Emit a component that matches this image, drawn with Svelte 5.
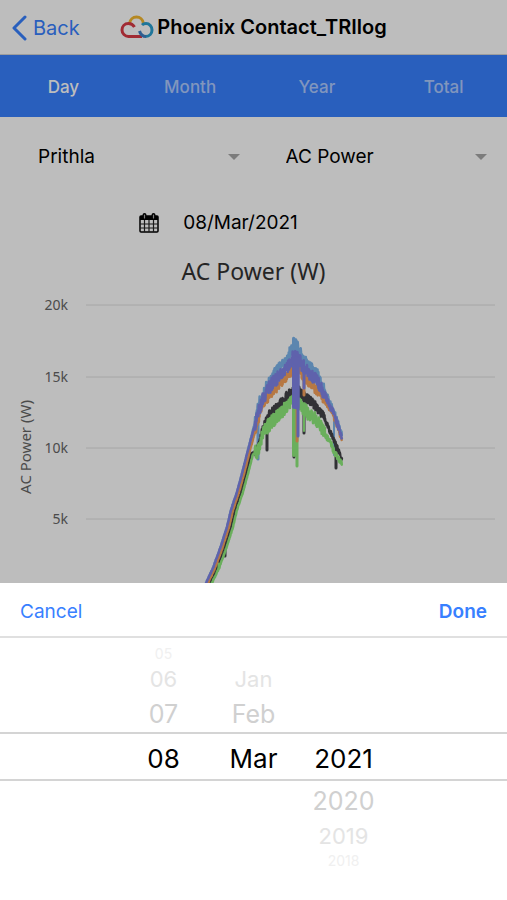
<script lang="ts">
  interface Series {
    name: string;
    color: string;
    jitter: number;
    points: [number, number][];
    // short dips: [x, depth y, stroke width]
    drops: [number, number, number][];
  }

  const tabs = ['Day', 'Month', 'Year', 'Total'];
  let activeTab = $state('Day');
  let plant = $state('Prithla');
  let metric = $state('AC Power');

  const ticks = [
    { label: '20k', y: 20 },
    { label: '15k', y: 92 },
    { label: '10k', y: 163 },
    { label: '5k', y: 234 },
  ];

  const rise: [number, number][] = [[202, 306], [206, 298], [213, 283], [220, 264], [227, 242], [231, 225], [237, 207], [243, 185], [247, 169]];

  const shift = (dx: number): [number, number][] => rise.map(([x, y]) => [x + dx, y]);

  const series: Series[] = [
    {
      name: 'Inverter 1', color: '#7cb5ec', jitter: 8,
      points: [...rise, [257, 129], [262, 110], [267, 103], [273, 91], [282, 83], [288, 74], [293, 60], [298, 64], [307, 81], [317, 91], [325, 107], [333, 125], [342, 150]],
      drops: [[258, 174, 3], [293, 54, 2], [298, 59, 2], [334, 170, 2]],
    },
    {
      name: 'Inverter 2', color: '#434348', jitter: 5,
      points: [...shift(4), [257, 165], [262, 146], [270, 129], [280, 119], [290, 108], [297, 105], [305, 112], [313, 118], [323, 131], [333, 153], [340, 169], [342, 175]],
      drops: [[225, 271, 3], [267, 165, 3], [294, 172, 3], [304, 148, 3], [336, 183, 3]],
    },
    {
      name: 'Inverter 3', color: '#90ed7d', jitter: 7,
      points: [...shift(6), [258, 166], [263, 148], [272, 136], [280, 129], [290, 118], [297, 116], [307, 127], [317, 136], [325, 148], [335, 168], [342, 178]],
      drops: [[219, 279, 3], [294, 170, 4], [297, 181, 3], [304, 146, 2]],
    },
    {
      name: 'Inverter 4', color: '#f7a35c', jitter: 6,
      points: [...shift(2), [257, 139], [263, 120], [270, 108], [280, 98], [290, 87], [296, 82], [303, 90], [310, 98], [320, 107], [333, 129], [342, 155]],
      drops: [[297, 156, 3], [304, 110, 3]],
    },
    {
      name: 'Inverter 5', color: '#8085e9', jitter: 7,
      points: [...rise, [257, 132], [262, 116], [267, 106], [273, 97], [282, 89], [288, 81], [293, 72], [298, 74], [307, 86], [317, 97], [325, 110], [333, 127], [342, 152]],
      drops: [[294, 122, 4], [297, 122, 5], [298, 151, 3], [304, 103, 3]],
    },
  ];

  function noise(n: number): number {
    const s = Math.sin(n * 12.9898) * 43758.5453;
    return (s - Math.floor(s)) * 2 - 1;
  }

  function valueAt(points: [number, number][], x: number): number {
    for (let i = 1; i < points.length; i++) {
      const [x0, y0] = points[i - 1];
      const [x1, y1] = points[i];
      if (x <= x1) return y0 + ((y1 - y0) * (x - x0)) / (x1 - x0);
    }
    return points[points.length - 1][1];
  }

  // The signal is smooth in the morning and gets noisy around noon
  function linePath(s: Series, seed: number): string {
    let d = '';
    for (let x = s.points[0][0]; x <= 342; x += 0.3) {
      const amount = x < 255 ? 0.6 : x > 325 ? s.jitter * 0.5 : s.jitter;
      const y = valueAt(s.points, x) + noise(x + seed * 31) * amount;
      d += `${d ? 'L' : 'M'}${x.toFixed(1)} ${y.toFixed(1)}`;
    }
    return d;
  }

  const columns = [
    { label: 'Day', before: ['05', '06', '07'], selected: '08', after: [] },
    { label: 'Month', before: ['Jan', 'Feb'], selected: 'Mar', after: [] },
    { label: 'Year', before: [], selected: '2021', after: ['2020', '2019', '2018'] },
  ];
</script>

<div class="page">
  <header class="toolbar">
    <button class="back">
      <svg width="15" height="26" viewBox="0 0 15 26" aria-hidden="true">
        <path d="M13 2 2 13l11 11" fill="none" stroke="currentColor" stroke-width="3" stroke-linecap="round" stroke-linejoin="round" />
      </svg>
      Back
    </button>
    <div class="brand">
      <svg width="34" height="24" viewBox="0 0 34 24" fill="none" stroke-width="3" aria-hidden="true">
        <path d="M9.500 8.500C10 4.500 13 2 16.500 2C20 2 23 4.500 23.500 8.500" stroke="#f5b82e" />
        <path d="M14.500 12C13 9.500 11 8.500 8.500 8.500C4.500 8.500 2 11.500 2 15C2 18.500 5 21.500 8.500 21.500H22" stroke="#d93a46" />
        <path d="M22 10C23 9 24.500 8.500 26 8.500C29.500 8.500 32 11.500 32 15C32 18.500 29.500 21.500 25.500 21.500" stroke="#2b9fd0" />
        <path d="M19.500 16C20.500 19.500 23 21.500 26 21.500" stroke="#3f7fc4" />
      </svg>
      <h1>Phoenix Contact_TRIlog</h1>
    </div>
  </header>

  <nav class="tabs">
    {#each tabs as tab}
      <button class:active={activeTab === tab} onclick={() => (activeTab = tab)}>{tab}</button>
    {/each}
  </nav>

  <main>
    <div class="filters">
      <div class="select">
        <select aria-label="Plant" bind:value={plant}>
          <option>Prithla</option>
        </select>
      </div>
      <div class="select">
        <select aria-label="Measurement" bind:value={metric}>
          <option>AC Power</option>
        </select>
      </div>
    </div>

    <button class="date">
      <svg width="20" height="20" viewBox="0 0 20 20" aria-hidden="true">
        <rect x="1" y="3" width="18" height="16" rx="1" fill="none" stroke="#000" stroke-width="1.500" />
        <path d="M1 3h18v4H1z" />
        <path d="M1 11h18M1 15h18M5.500 7v12M10 7v12M14.500 7v12" stroke="#222" stroke-width="1.200" />
        <path d="M5.500 2v3M14.500 2v3" stroke="#000" stroke-width="4" stroke-linecap="round" />
        <path d="M5.500 2v3M14.500 2v3" stroke="#aaa" stroke-width="1.200" stroke-linecap="round" />
      </svg>
      08/Mar/2021
    </button>

    <section class="chart">
      <h2>AC Power (W)</h2>
      <svg viewBox="0 0 507 310" role="img" aria-label="AC power over the day">
        {#each ticks as tick}
          <line x1="86" x2="495" y1={tick.y} y2={tick.y} class="grid" />
          <text x="68" y={tick.y + 5} text-anchor="end">{tick.label}</text>
        {/each}
        <text class="axis-title" transform="translate(31 162) rotate(-90)" text-anchor="middle">AC Power (W)</text>
        {#each series as s, i (s.name)}
          <g fill="none" stroke={s.color} stroke-linecap="round" stroke-linejoin="round">
            <path d={linePath(s, i)} stroke-width="2.500" />
            {#each s.drops as [x, y, w]}
              <line x1={x} x2={x} y1={valueAt(s.points, x)} y2={y} stroke-width={w} />
            {/each}
          </g>
        {/each}
      </svg>
    </section>
  </main>
</div>

<div class="backdrop"></div>

<div class="picker" role="dialog" aria-label="Choose a date">
  <div class="picker-bar">
    <button>Cancel</button>
    <button class="done">Done</button>
  </div>
  <div class="wheels">
    {#each columns as col}
      <div class="wheel" role="group" aria-label={col.label}>
        <div class="before">
          {#each col.before as option, i}
            <button class="step-{col.before.length - i}">{option}</button>
          {/each}
        </div>
        <button class="selected">{col.selected}</button>
        <div class="after">
          {#each col.after as option, i}
            <button class="step-{i + 1}">{option}</button>
          {/each}
        </div>
      </div>
    {/each}
  </div>
</div>

<style>
  :global(body) {
    margin: 0;
    background: #fff;
    font-family: Inter, Roboto, sans-serif;
    color: #000;
  }

  button {
    padding: 0;
    border: 0;
    background: none;
    font: inherit;
    color: inherit;
    cursor: pointer;
  }

  .page {
    height: 100vh;
    overflow: hidden;
  }

  .toolbar {
    display: grid;
    grid-template-columns: 1fr auto 1fr;
    align-items: center;
    height: 55px;
    padding: 0 12px;
    border-bottom: 1px solid #d4d4d4;
    box-sizing: border-box;
  }

  .back {
    display: flex;
    align-items: center;
    gap: 6px;
    padding-top: 2px;
    font-size: 20px;
    color: #3880ff;
  }

  .brand {
    display: flex;
    align-items: center;
    gap: 3px;
  }

  h1 {
    margin: 0;
    font-size: 20px;
    font-weight: 600;
    line-height: 24px;
    white-space: nowrap;
  }

  .tabs {
    display: grid;
    grid-template-columns: repeat(4, 1fr);
    height: 62px;
    background: #3880ff;
  }

  .tabs button {
    padding-top: 2px;
    font-size: 17px;
    font-weight: 500;
    color: rgba(255, 255, 255, 0.6);
  }

  .tabs button.active {
    color: #fff;
  }

  .filters {
    display: grid;
    grid-template-columns: 1fr 1fr;
    gap: 16px;
    padding: 20px 8px 0 20px;
  }

  .select {
    display: flex;
    align-items: center;
    padding: 8px 12px 8px 18px;
  }

  .select::after {
    content: '';
    border: 6px solid transparent;
    border-top-color: #a8a8a8;
    border-bottom: 0;
  }

  select {
    flex: 1;
    padding: 0;
    border: 0;
    background: none;
    appearance: none;
    font: inherit;
    font-size: 19px;
    line-height: 24px;
    color: inherit;
  }

  .date {
    display: flex;
    align-items: center;
    gap: 24px;
    margin: 34px auto 0;
    padding-right: 70px;
    font-size: 19px;
    line-height: 24px;
  }

  .chart h2 {
    margin: 22px 0 0;
    font-family: 'Noto Sans', sans-serif;
    font-size: 23px;
    font-weight: 400;
    line-height: 28px;
    text-align: center;
    color: #333;
  }

  .chart svg {
    display: block;
    width: 100%;
  }

  .chart text {
    font-family: 'Noto Sans', sans-serif;
    font-size: 14px;
    fill: #666;
  }

  .chart .axis-title {
    font-size: 15px;
  }

  .grid {
    stroke: #e0e0e0;
    stroke-width: 1;
  }

  .backdrop {
    position: fixed;
    inset: 0;
    background: rgba(0, 0, 0, 0.26);
  }

  .picker {
    position: fixed;
    right: 0;
    bottom: 0;
    left: 0;
    background: #fff;
  }

  .picker-bar {
    display: flex;
    justify-content: space-between;
    height: 55px;
    padding: 4px 20px 0;
    border-bottom: 2px solid #e0e0e0;
    box-sizing: border-box;
    font-size: 19px;
    color: #3880ff;
  }

  .done {
    font-weight: 600;
  }

  .wheels {
    display: grid;
    grid-template-columns: repeat(3, 90px);
    grid-template-rows: 94px 48px 120px;
    justify-content: center;
    background: linear-gradient(#d4d4d4, #d4d4d4) 0 94px / 100% 2px no-repeat, linear-gradient(#d4d4d4, #d4d4d4) 0 141px / 100% 2px no-repeat;
  }

  .wheel {
    display: grid;
    grid-row: 1 / -1;
    grid-template-rows: subgrid;
    font-size: 26px;
  }

  .selected {
    padding-top: 4px;
  }

  .before,
  .after {
    display: flex;
    flex-direction: column;
    align-items: center;
  }

  .before {
    justify-content: flex-end;
  }

  .after {
    padding-top: 3px;
  }

  .step-1 {
    height: 36px;
    font-size: 25px;
    color: #d0d0d0;
  }

  .step-2 {
    height: 34px;
    font-size: 22px;
    color: #e4e4e4;
  }

  .step-3 {
    height: 16px;
    font-size: 14px;
    line-height: 16px;
    color: #f0f0f0;
  }
</style>
